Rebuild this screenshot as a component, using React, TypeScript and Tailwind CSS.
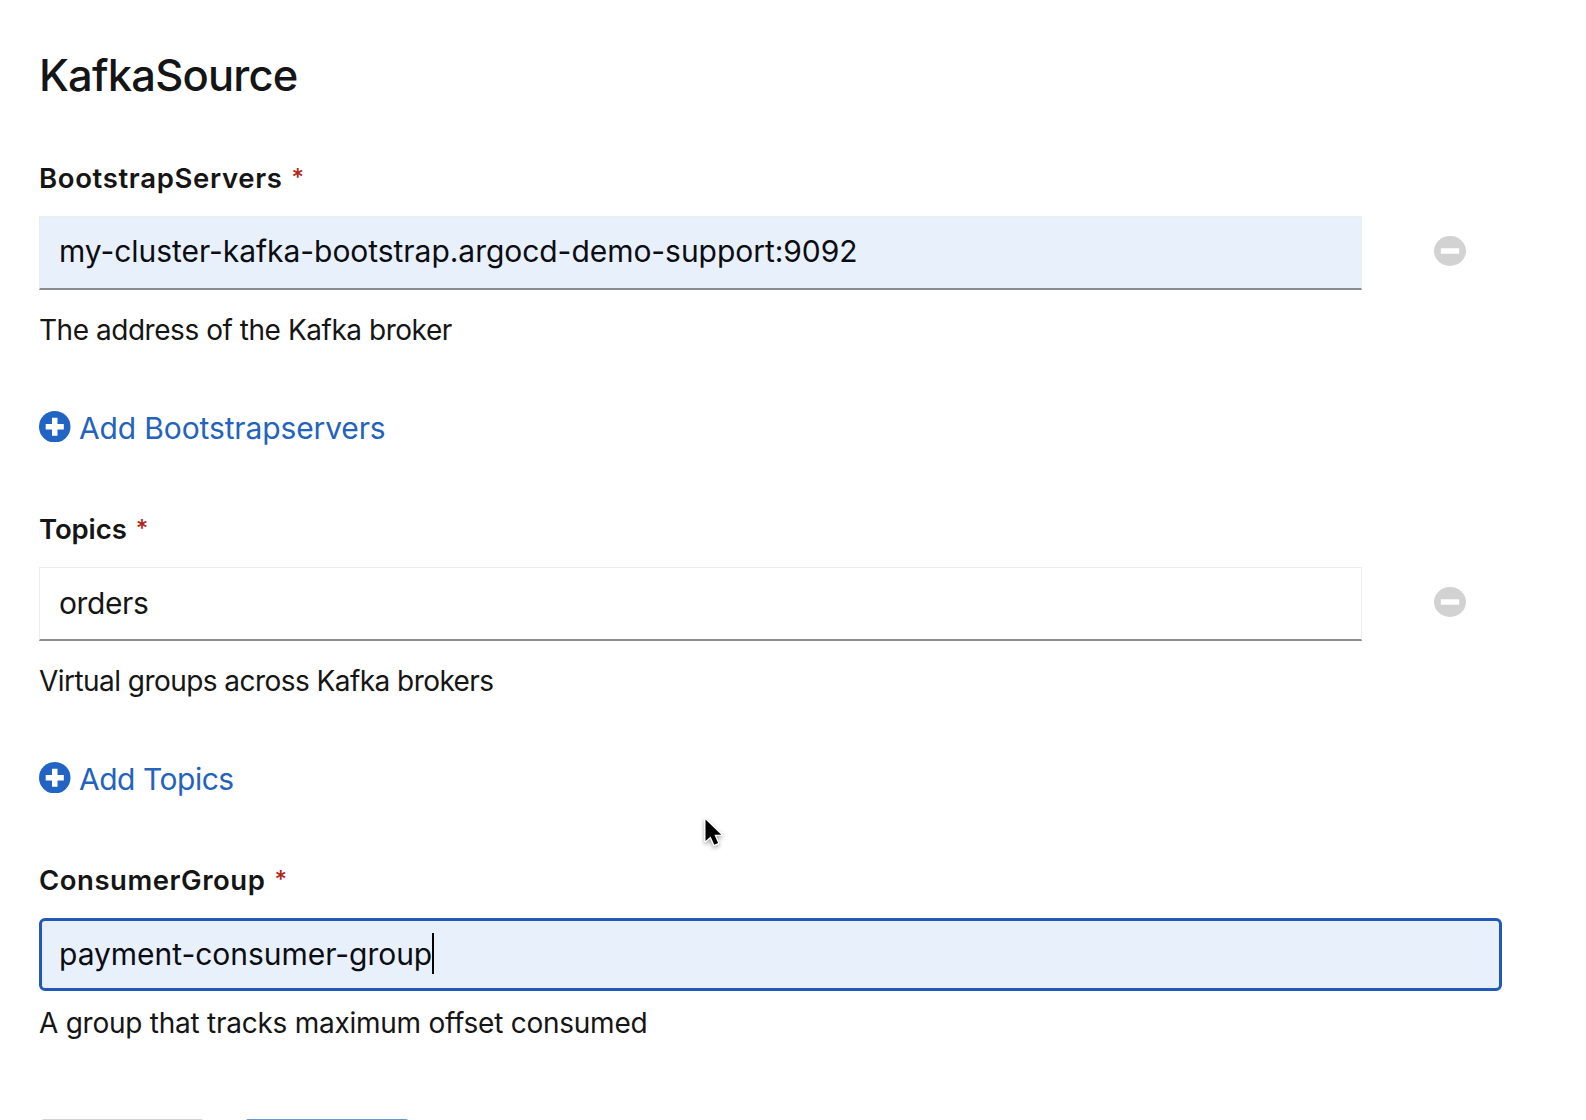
import React from "react";

function CircleIcon({ kind, className }: { kind: "plus" | "minus"; className: string }) {
  return (
    <svg viewBox="0 0 32 32" className={className} aria-hidden="true" preserveAspectRatio="none">
      <circle cx="16" cy="16" r="16" fill="currentColor" />
      {kind === "plus" ? (
        <path d="M13.2 6.8h5.6v6.4h6.4v5.6h-6.4v6.4h-5.6v-6.4H6.8v-5.6h6.4z" fill="#fff" />
      ) : (
        <path d="M6.8 13.1h18.4v5.8H6.8z" fill="#fff" />
      )}
    </svg>
  );
}

function Label({ text, className }: { text: string; className: string }) {
  return (
    <div className="flex h-10 text-[27.5px] leading-10 font-semibold text-[#151515]">
      <span className={className}>{text}</span>
      <span className="ml-[9px] text-[24px] leading-10 font-medium text-[#b3261a]">*</span>
    </div>
  );
}

function AddLink({ text, className }: { text: string; className: string }) {
  return (
    <div className="mt-[58px] flex h-10 items-start text-[30px] leading-10 font-[370] text-[#2463bc]">
      <CircleIcon kind="plus" className="mt-[2.5px] mr-[8.5px] h-[31.5px] w-[31.5px] text-[#2264c4]" />
      <span className={className}>{text}</span>
    </div>
  );
}

const field =
  "flex h-[74px] w-[1322.5px] items-center border border-b-2 border-[#ededed] border-b-[#8a8d90] pl-[19px] text-[30px] font-[370]";

export default function App() {
  return (
    <main className="relative h-[1120px] w-[1586px] overflow-hidden bg-white pt-[45px] pl-[39px] font-['Inter',sans-serif] whitespace-nowrap text-[#151515]">
      <h1 className="h-[60px] text-[43.5px] leading-[60px] font-medium tracking-[-0.8px]">KafkaSource</h1>

      <section className="mt-[53px]">
        <Label text="BootstrapServers" className="tracking-[0.66px]" />
        <div className="mt-[18px] flex items-center">
          <div className={`${field} bg-[#e8f0fc] pb-[2px] text-[#0b0d12]`}>
            <span className="tracking-[-0.04px]">my-cluster-kafka-bootstrap.argocd-demo-support:9092</span>
          </div>
          <CircleIcon kind="minus" className="mb-[5px] ml-[72.5px] h-[30px] w-8 text-[#d2d2d2]" />
        </div>
        <p className="mt-5 h-10 text-[28px] leading-10 font-[370] tracking-[-0.46px]">The address of the Kafka broker</p>
        <AddLink text="Add Bootstrapservers" className="tracking-[-0.13px]" />
      </section>

      <section className="mt-[61px]">
        <Label text="Topics" className="tracking-[-0.1px]" />
        <div className="mt-[18px] flex items-center">
          <div className={`${field} bg-white`}>
            <span className="tracking-[-0.4px]">orders</span>
          </div>
          <CircleIcon kind="minus" className="mb-[5px] ml-[72.5px] h-[30px] w-8 text-[#d2d2d2]" />
        </div>
        <p className="mt-5 h-10 text-[28px] leading-10 font-[370] tracking-[-0.55px]">Virtual groups across Kafka brokers</p>
        <AddLink text="Add Topics" className="tracking-[-0.48px]" />
      </section>

      <section className="mt-[61px]">
        <Label text="ConsumerGroup" className="tracking-[0.54px]" />
        <div className="mt-[18px] flex h-[73px] w-[1463px] items-center rounded-[6px] border-3 border-[#2259b8] bg-[#e8f0fc] pl-[17px] text-[30px] font-[370] text-[#0b0d12]">
          <span className="tracking-[-0.03px]">payment-consumer-group</span>
          <span className="mb-[2px] h-[41px] w-[1.5px] bg-black" />
        </div>
        <p className="mt-3 h-10 text-[28px] leading-10 font-[370] tracking-[-0.25px]">A group that tracks maximum offset consumed</p>
      </section>

      <div className="mt-[76px] flex gap-[43px] pl-[3px]">
        <div className="h-20 w-[161px] rounded-t-[2px] bg-[#d2d2d2]" />
        <div className="h-20 w-[162px] rounded-t-[2px] bg-[#6f96cc]" />
      </div>

      <svg
        viewBox="0 0 24 34"
        className="absolute top-[815px] left-[702px] h-[34px] w-6 overflow-visible drop-shadow-[0_2px_2px_rgba(0,0,0,0.35)]"
        aria-hidden="true"
      >
        <path
          d="M3.5 4.5v21.6l5.1-4.7 3.7 8.4 3.8-1.7-3.7-8.3h6.9z"
          fill="#000"
          stroke="#fff"
          strokeWidth="2.6"
          paintOrder="stroke"
          strokeLinejoin="round"
        />
      </svg>
    </main>
  );
}
